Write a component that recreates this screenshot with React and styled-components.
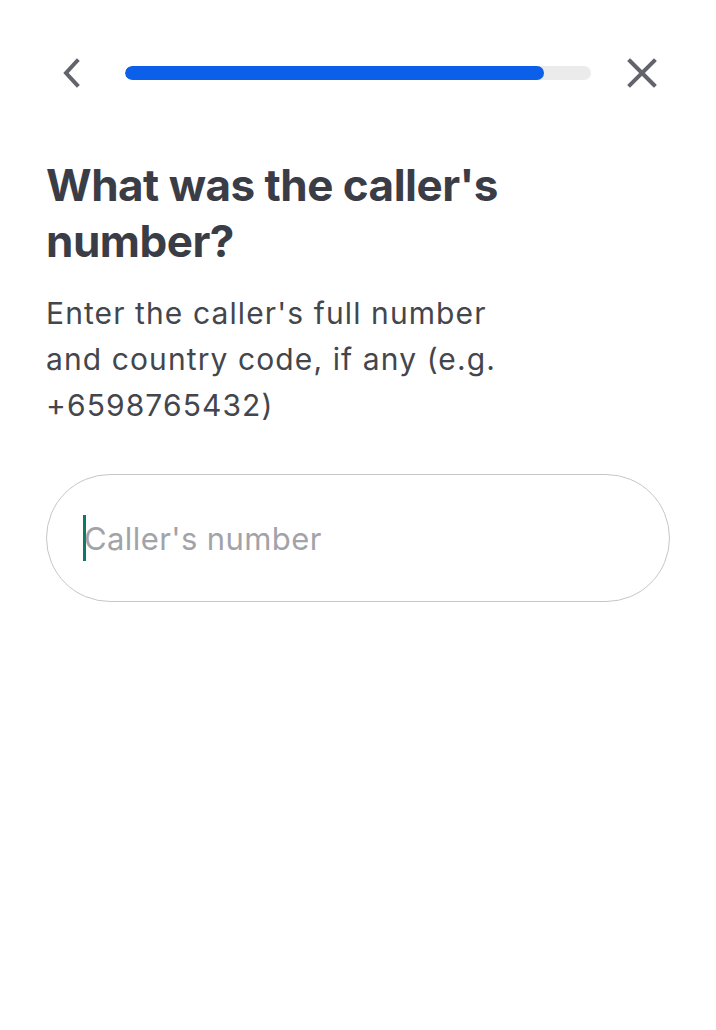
import React from "react";
import styled, { createGlobalStyle } from "styled-components";

const GlobalStyle = createGlobalStyle`
  html, body {
    margin: 0;
    padding: 0;
    background: #ffffff;
  }
  body {
    font-family: Inter, "Noto Sans", "Liberation Sans", sans-serif;
    -webkit-font-smoothing: antialiased;
  }
`;

const Screen = styled.div`
  width: 716px;
  min-height: 1030px;
  box-sizing: border-box;
  padding: 56px 46px 0 46px;
  background: #fff;
`;

const TopBar = styled.div`
  display: flex;
  align-items: center;
  height: 34px;
`;

const IconButton = styled.button`
  display: flex;
  align-items: center;
  justify-content: center;
  width: ${(p) => p.$size}px;
  height: 34px;
  padding: 0;
  border: none;
  background: none;
  color: #62636b;
  cursor: pointer;
`;

const Track = styled.div`
  flex: 1;
  height: 14px;
  margin: 0 ${(p) => p.$right}px 0 ${(p) => p.$left}px;
  border-radius: 7px;
  background: #ebebeb;
  overflow: hidden;
`;

const Fill = styled.div`
  height: 100%;
  border-radius: 7px;
  background: #0b5fe8;
`;

const Spacer = styled.div`
  width: ${(p) => p.$w}px;
`;

const Title = styled.h1`
  margin: 67px 0 0 0;
  font-size: 44px;
  line-height: 56px;
  font-weight: 700;
  letter-spacing: -0.5px;
  color: #3b3d46;
  max-width: 480px;
`;

const Hint = styled.p`
  margin: 21px 0 0 0;
  font-size: 30px;
  line-height: 46px;
  font-weight: 400;
  letter-spacing: 1.1px;
  color: #44464d;
  max-width: 470px;
`;

const Field = styled.label`
  display: flex;
  align-items: center;
  height: 128px;
  margin-top: 46px;
  box-sizing: border-box;
  padding: 0 36px;
  border: 1.5px solid #c6c6c8;
  border-radius: 64px;
`;

const Input = styled.input`
  flex: 1;
  border: none;
  outline: none;
  padding: 0;
  background: transparent;
  font-family: Inter, "Noto Sans", "Liberation Sans", sans-serif;
  font-size: 31px;
  letter-spacing: 0.4px;
  color: #3b3d46;
  caret-color: #0a7a6a;

  &::placeholder {
    color: #a2a3a8;
  }
`;

const Caret = styled.span`
  width: 3px;
  height: 46px;
  margin-right: -2px;
  background: #0a7a6a;
`;

export default function App() {
  const progress = 0.9;
  return (
    <>
      <GlobalStyle />
      <Screen>
        <TopBar>
          <IconButton $size={50} aria-label="Back">
            <svg width="22" height="30" viewBox="0 0 22 30" fill="none">
              <path
                d="M17 3 L6 15 L17 27"
                stroke="currentColor"
                strokeWidth="4"
                strokeLinecap="square"
                strokeLinejoin="miter"
              />
            </svg>
          </IconButton>
          <Track $left={29} $right={36}>
            <Fill style={{ width: `${progress * 100}%` }} />
          </Track>
          <IconButton $size={30} aria-label="Close">
            <svg width="30" height="30" viewBox="0 0 30 30" fill="none">
              <path
                d="M3 3 L27 27 M27 3 L3 27"
                stroke="currentColor"
                strokeWidth="4"
                strokeLinecap="square"
              />
            </svg>
          </IconButton>
          <Spacer $w={13} />
        </TopBar>

        <Title>What was the caller's number?</Title>
        <Hint>
          Enter the caller's full number and country code, if any (e.g.
          +6598765432)
        </Hint>

        <Field>
          <Caret />
          <Input type="tel" placeholder="Caller's number" />
        </Field>
      </Screen>
    </>
  );
}
